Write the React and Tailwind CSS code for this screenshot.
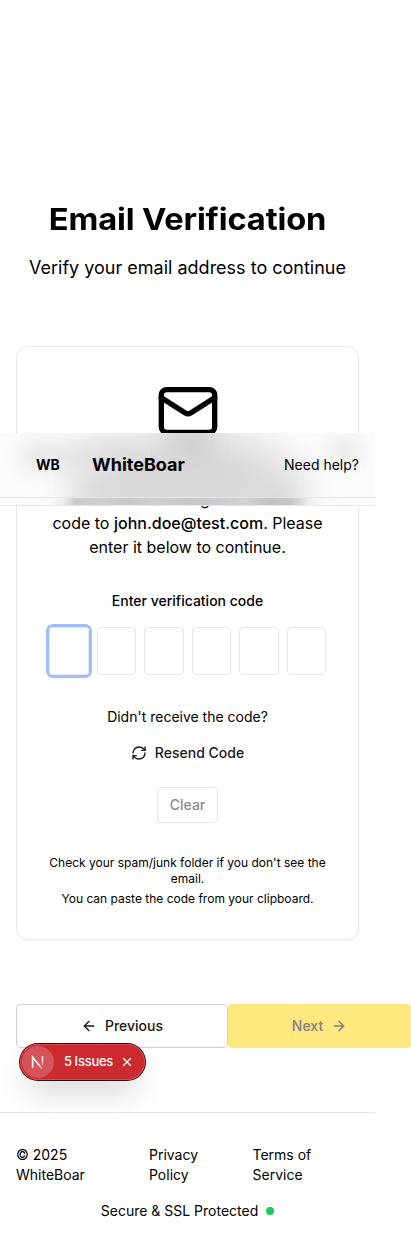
import { Mail, RefreshCw, ArrowLeft, ArrowRight, X } from 'lucide-react';

function Header() {
  return (
    <div className="absolute left-0 top-[433px] z-20 w-[375px]">
      <header className="relative flex h-[65px] items-center justify-between overflow-hidden border-b border-[#e5e7eb] bg-[#fcfcfc] pr-4">
        <div className="absolute left-[95px] top-[8px] h-[90px] w-[175px] bg-[#d6d6d6] blur-[22px]" />
        <div className="absolute left-[76px] top-[34px] h-[60px] w-[226px] bg-[#dadada] blur-[17px]" />
        <div className="absolute left-[165px] top-[-14px] h-[44px] w-[50px] bg-[#cfcfcf] blur-[14px]" />
        <div className="absolute left-[22px] top-[14px] h-[18px] w-[110px] bg-[#dcdcdc] blur-[12px]" />
        <div className="absolute left-[334px] top-[9px] h-[18px] w-[22px] bg-[#d8d8d8] blur-[11px]" />
        <div className="relative flex items-center">
          <span className="ml-9 w-14 text-sm font-bold">WB</span>
          <span className="text-lg font-bold leading-7">WhiteBoar</span>
        </div>
        <a className="relative text-sm">Need help?</a>
      </header>
      <div className="h-2 border-b border-[#e5e7eb] bg-[linear-gradient(90deg,#fcfdfd_0px,#fafafa_50px,#ededed_63px,#cbcbcb_76px,#d0d0d0_100px,#c8c8c8_125px,#cecece_155px,#c7c7c7_190px,#d2d2d2_245px,#c2c2c2_270px,#c8c8c8_292px,#eeeeee_309px,#fafafa_322px,#fcfdfd_375px)]" />
    </div>
  );
}

function IssuesBadge() {
  return (
    <div className="absolute left-5 top-[1044px] z-30 flex h-9 w-[125px] items-center rounded-full bg-[#ca2a30] text-white shadow-[0_0_0_1px_#171717,inset_0_0_0_1px_#e5484d,0_16px_32px_-8px_rgba(0,0,0,0.24)]">
      <div className="ml-0.5 flex size-8 items-center justify-center rounded-full bg-white/20">
        <svg width="14" height="14" viewBox="0 0 14 14" fill="none">
          <defs>
            <linearGradient id="nd" x1="8" y1="9" x2="12" y2="14" gradientUnits="userSpaceOnUse">
              <stop stopColor="white" />
              <stop offset="1" stopColor="white" stopOpacity="0.2" />
            </linearGradient>
            <linearGradient id="nv" x1="11" y1="4" x2="11" y2="12" gradientUnits="userSpaceOnUse">
              <stop stopColor="white" />
              <stop offset="1" stopColor="white" stopOpacity="0" />
            </linearGradient>
          </defs>
          <path d="M1.6 12.8V2.2L11 13.7" stroke="url(#nd)" strokeWidth="1.6" />
          <path d="M11.5 1.2V11" stroke="url(#nv)" strokeWidth="1.5" />
        </svg>
      </div>
      <span className="ml-2.5 w-[50px] whitespace-nowrap text-[13px] font-medium tracking-[-0.25px] [word-spacing:-0.4px]">5 Issues</span>
      <X className="ml-1.5 size-3.5" strokeWidth={2.4} />
    </div>
  );
}

export default function App() {
  return (
    <div className="relative h-[1253px] w-[411px] overflow-hidden bg-white font-['Inter',sans-serif] text-black">
      <Header />
      <main className="flex w-[375px] flex-col px-4 pt-[200px]">
        <div className="text-center">
          <h1 className="scale-x-[1.09] whitespace-nowrap text-[30px] font-bold leading-[38px] tracking-[-0.15px]">Email Verification</h1>
          <p className="mt-4 whitespace-nowrap text-lg leading-7">Verify your email address to continue</p>
        </div>
        <section className="mt-16 flex h-[594px] flex-col items-center rounded-xl border border-[#e5e7eb] px-8 pt-8 text-center shadow-xs">
          <Mail className="size-16 shrink-0" strokeWidth={2} />
          <p className="mt-11 w-[280px] text-base leading-6">
            We've sent a 6-digit verification<br />code to <strong className="font-medium">john.doe@test.com</strong>. Please<br />enter it below to continue.
          </p>
          <label className="mt-8 text-sm font-medium leading-5">Enter verification code</label>
          <div className="mt-4 flex w-[277px] gap-2">
            <div className="h-12 flex-1 rounded-sm border border-[#e5e7eb] shadow-[0_0_0_3px_#9dbffb]" />
            <div className="h-12 flex-1 rounded-sm border border-[#e5e7eb]" />
            <div className="h-12 flex-1 rounded-sm border border-[#e5e7eb]" />
            <div className="h-12 flex-1 rounded-sm border border-[#e5e7eb]" />
            <div className="h-12 flex-1 rounded-sm border border-[#e5e7eb]" />
            <div className="h-12 flex-1 rounded-sm border border-[#e5e7eb]" />
          </div>
          <p className="mt-8 text-sm leading-5">Didn't receive the code?</p>
          <button className="mt-2 flex h-9 shrink-0 items-center gap-2 text-sm font-medium text-[#171717]">
            <RefreshCw className="size-4" />Resend Code
          </button>
          <button className="mt-4 h-9 w-[61px] shrink-0 rounded-sm border border-[#e5e7eb] text-sm font-medium text-[#8b8b8b]">Clear</button>
          <p className="mt-8 text-xs leading-4">Check your spam/junk folder if you don't see the email.</p>
          <p className="mt-1 text-xs leading-4">You can paste the code from your clipboard.</p>
        </section>
        <div className="mt-16 flex h-11 w-[395px]">
          <button className="flex w-[212px] items-center justify-center gap-2 rounded-sm border border-[#d1d1d1] text-sm font-medium text-[#171717]">
            <ArrowLeft className="size-4" />Previous
          </button>
          <button className="flex w-[183px] items-center justify-center gap-2 rounded-sm bg-[#ffe880] text-sm font-medium text-[#808080]">
            Next<ArrowRight className="size-4" />
          </button>
        </div>
      </main>
      <IssuesBadge />
      <footer className="mt-16 w-[375px] border-t border-[#e5e7eb] px-4 pt-8 text-sm leading-5">
        <div className="flex">
          <span className="w-[133px]">© 2025<br />WhiteBoar</span>
          <span className="w-[103.5px]">Privacy<br />Policy</span>
          <span>Terms of<br />Service</span>
        </div>
        <div className="mt-4 flex items-center justify-center gap-2">
          <span>Secure &amp; SSL Protected</span>
          <span className="size-2 rounded-full bg-[#22c55e]" />
        </div>
      </footer>
    </div>
  );
}
